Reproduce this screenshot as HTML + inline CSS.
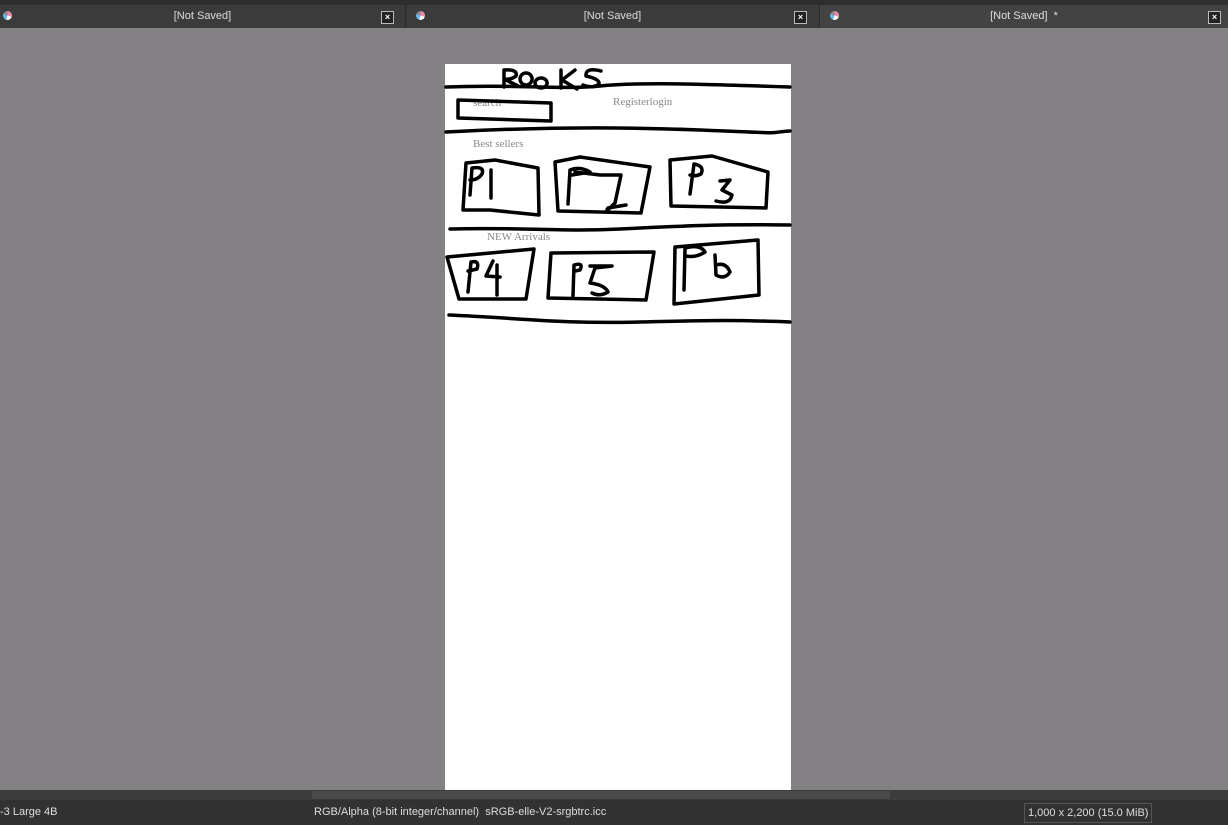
<!DOCTYPE html><html><head><style>
body{margin:0;width:1228px;height:825px;background:#838184;position:relative;overflow:hidden;font-family:"Liberation Sans",sans-serif}
.top{position:absolute;left:0;top:0;width:1228px;height:5px;background:#2e2e2e}
.tab{position:absolute;top:5px;height:23px;background:#3b3b3b;color:#ddd;font-size:11px;line-height:23px;border-right:1px solid #2a2a2a}
.tab .t{position:absolute;width:100%;text-align:center;left:0;top:0}
.x{position:absolute;top:6px;width:11px;height:11px;border:1px solid #bbb;background:#222;color:#fff;font-size:9px;line-height:11px;text-align:center;font-weight:bold}
.ic{position:absolute;top:6px;left:3px;width:9px;height:9px;border-radius:50%;background:conic-gradient(#e8a 0 30%,#fff 30% 55%,#6be 55% 80%,#888 80%)}
.canvas{position:absolute;left:445px;top:64px;width:346px;height:726px;background:#fff}
.sb{position:absolute;left:0;top:790px;width:1228px;height:10px;background:#3c3c3c}
.st{position:absolute;left:0;top:800px;width:1228px;height:25px;background:#323232;color:#ddd;font-size:11px;line-height:25px;white-space:nowrap}
.gt{position:absolute;font-family:"Liberation Serif",serif;font-size:11px;color:#888}
</style></head><body>
<div class="top"></div>
<div class="tab" style="left:0;width:405px"><div class="ic"></div><div class="t">[Not Saved]</div><div class="x" style="left:381px">×</div></div>
<div class="tab" style="left:406px;width:413px"><div class="ic" style="left:10px"></div><div class="t">[Not Saved]</div><div class="x" style="left:388px">×</div></div>
<div class="tab" style="left:820px;width:408px;background:#434343"><div class="ic" style="left:10px"></div><div class="t">[Not Saved] &nbsp;*</div><div class="x" style="left:388px">×</div></div>
<div class="canvas"></div>
<div class="gt" style="left:473px;top:97px">search</div>
<div class="gt" style="left:613px;top:96px">Registerlogin</div>
<div class="gt" style="left:473px;top:138px">Best sellers</div>
<div class="gt" style="left:487px;top:231px">NEW Arrivals</div>
<svg style="position:absolute;left:0;top:0" width="1228" height="825" fill="none" stroke="#000" stroke-width="3.5" stroke-linecap="round" stroke-linejoin="round">
<path d="M446 87 C520 84 560 90 600 86 S700 84 790 87"/>
<path d="M446 132 C520 128 600 126 700 130 S760 133 790 131"/>
<path d="M450 229 C520 227 560 232 620 229 S720 224 790 225"/>
<path d="M449 315 C520 318 560 324 640 322 S740 320 790 322"/>
<path d="M458 100 L551 103 L551 121 L458 118 Z"/>
<path d="M504 70 L504 87 M504 70 Q518 69 516 76 Q511 80 504 79 L518 86 M526 73 a6 6 0 1 0 .1 0 M541 78 a6 5 0 1 0 .1 0 M561 70 L561 88 M575 70 L562 80 L577 89 M601 71 Q585 67 586 76 Q600 79 599 84 Q593 89 583 85"/>
<path d="M466 163 L495 160 L538 168 L539 215 L490 210 L463 210 Z M470 195 L472 168 Q485 166 482 174 Q478 180 470 180 M491 170 L491 198"/>
<path d="M555 162 L580 157 L650 167 L641 213 L558 211 Z M568 204 L570 170 Q580 166 590 172 L572 175 M575 172 L600 175 L621 175 L615 203 Q604 214 608 208 L626 205"/>
<path d="M670 160 L712 156 L768 172 L766 208 L671 206 Z M690 194 L694 164 Q705 166 701 174 Q695 177 690 175 M720 181 L730 180 L722 190 L732 195 Q730 205 716 201"/>
<path d="M447 257 L534 249 L526 299 L459 299 Z M468 292 L471 262 Q480 260 477 269 L468 271 M493 261 L486 276 L500 277 M497 265 L497 295"/>
<path d="M551 253 L654 252 L646 300 L548 298 Z M573 296 L574 265 Q584 262 580 270 L575 271 M590 266 L612 266 L595 268 L590 283 Q605 285 608 292 Q600 297 592 293"/>
<path d="M675 247 L758 240 L759 295 L674 304 Z M684 290 L685 248 Q700 244 705 252 Q696 258 686 256 M715 255 L716 275 Q725 280 730 272 Q726 262 716 265"/>
</svg>
<div class="sb"><div style="position:absolute;left:312px;top:1px;width:578px;height:8px;background:#4a4a4a"></div></div>
<div class="st"><span style="position:absolute;left:0">-3 Large 4B</span><span style="position:absolute;left:314px">RGB/Alpha (8-bit integer/channel) &nbsp;sRGB-elle-V2-srgbtrc.icc</span><span style="position:absolute;left:1024px;top:3px;height:18px;line-height:18px;padding:0 3px;border:1px solid #555">1,000 x 2,200 (15.0 MiB)</span></div>
</body></html>
